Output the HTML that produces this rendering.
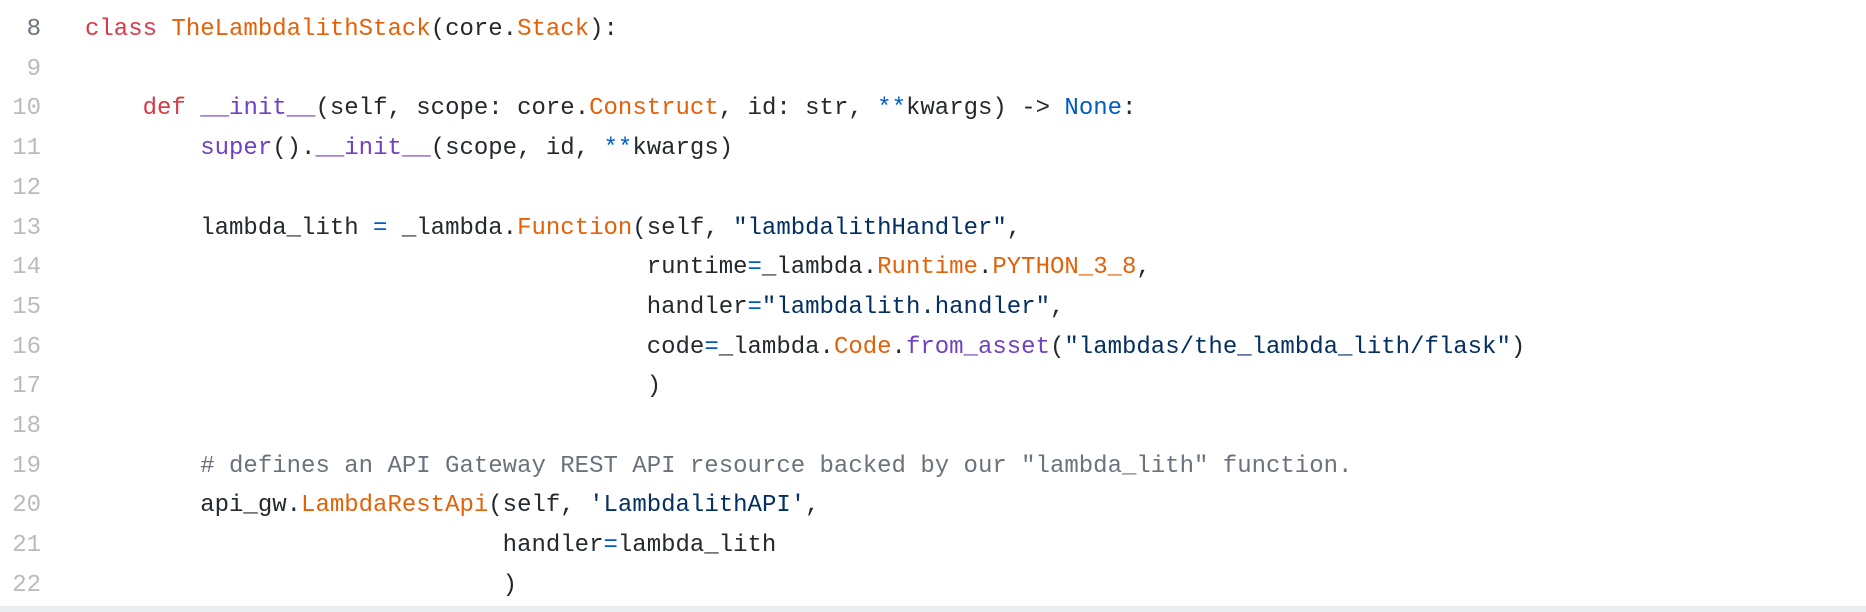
<!DOCTYPE html>
<html><head><meta charset="utf-8"><style>
html,body{margin:0;padding:0;background:#fff;width:1866px;height:612px;overflow:hidden}
.wrap{position:absolute;top:10px;left:0;font-family:"Liberation Mono",monospace;font-size:24px;line-height:39.7px;color:#24292e}
.ln{position:absolute;left:0;top:0;width:41px;text-align:right;color:#babbbc;white-space:pre}
.code{position:absolute;left:85px;top:0;white-space:pre}
.k{color:#d73a49}.c{color:#e36209}.s{color:#032f62}.p{color:#6f42c1}.b{color:#005cc5}.m{color:#6a737d}
.bot{position:absolute;left:0;top:606px;width:1866px;height:6px;background:#eaecef}
</style></head><body>
<div class="wrap"><div class="ln"><span style="color:#6a737d">8</span>
9
10
11
12
13
14
15
16
17
18
19
20
21
22</div><div class="code"><span class="k">class</span> <span class="c">TheLambdalithStack</span>(core.<span class="c">Stack</span>):

    <span class="k">def</span> <span class="p">__init__</span>(self, scope: core.<span class="c">Construct</span>, id: str, <span class="b">**</span>kwargs) -&gt; <span class="b">None</span>:
        <span class="p">super</span>().<span class="p">__init__</span>(scope, id, <span class="b">**</span>kwargs)

        lambda_lith <span class="b">=</span> _lambda.<span class="c">Function</span>(self, <span class="s">"lambdalithHandler"</span>,
                                       runtime<span class="b">=</span>_lambda.<span class="c">Runtime</span>.<span class="c">PYTHON_3_8</span>,
                                       handler<span class="b">=</span><span class="s">"lambdalith.handler"</span>,
                                       code<span class="b">=</span>_lambda.<span class="c">Code</span>.<span class="p">from_asset</span>(<span class="s">"lambdas/the_lambda_lith/flask"</span>)
                                       )

        <span class="m"># defines an API Gateway REST API resource backed by our "lambda_lith" function.</span>
        api_gw.<span class="c">LambdaRestApi</span>(self, <span class="s">'LambdalithAPI'</span>,
                             handler<span class="b">=</span>lambda_lith
                             )</div></div>
<div class="bot"></div>
</body></html>
